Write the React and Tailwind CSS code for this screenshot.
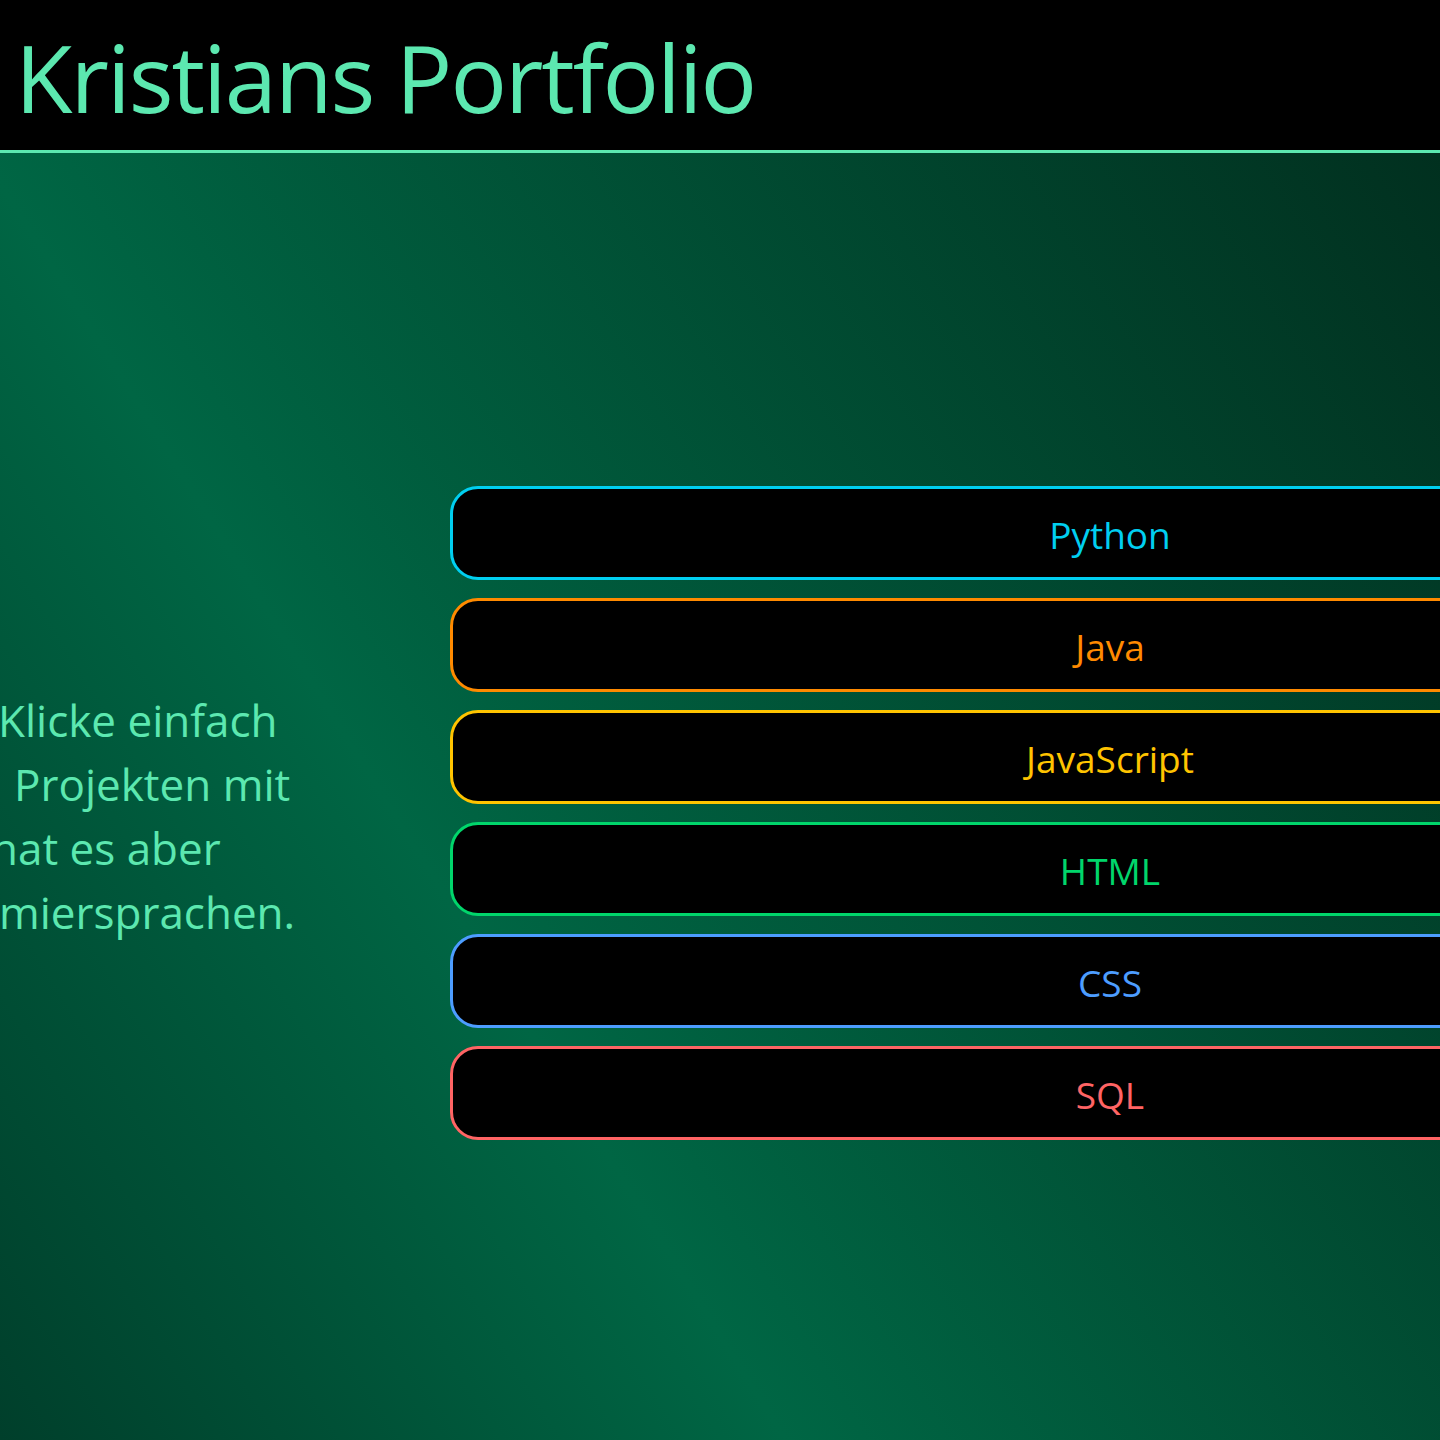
const languages = [
	{ name: "Python", className: "border-[#00cff0] text-[#00cff0]" },
	{ name: "Java", className: "border-[#ff8a00] text-[#ff8a00]" },
	{ name: "JavaScript", className: "border-[#ffc400] text-[#ffc400]" },
	{ name: "HTML", className: "border-[#00d66b] text-[#00d66b]" },
	{ name: "CSS", className: "border-[#4d9dff] text-[#4d9dff]" },
	{ name: "SQL", className: "border-[#ff6464] text-[#ff6464]" }
];

const App = () => (
	<div className="min-h-[1440px] w-full overflow-hidden font-['Open_Sans',sans-serif] text-[#5ce8b0]">
		<header className="h-[153px] bg-black border-b-[3px] border-[#5ce8b0] flex items-center px-[15px]">
			<h1 className="text-[94px] leading-none tracking-[-2px] mt-[4px]">Kristians Portfolio</h1>
		</header>
		<main className="h-[1287px] flex items-start bg-[linear-gradient(238deg,#01301f_0%,#006644_65%,#003f2b_100%)]">
			<div className="w-[450px] shrink-0 pt-[535px] text-[44px] leading-[64px] whitespace-pre">
				<div className="-ml-[2px]">Klicke einfach</div>
				<div className="ml-[14px]">Projekten mit</div>
				<div className="-ml-[9px]">hat es aber</div>
				<div className="-ml-[1px]">miersprachen.</div>
			</div>
			<nav className="w-[1320px] shrink-0 pt-[333px] flex flex-col gap-[18px]">
				{languages.map(({ name, className }) => (
					<button
						key={name}
						className={`h-[94px] w-full rounded-[28px] border-[3px] bg-black text-[37px] pt-[3px] ${className}`}
					>
						{name}
					</button>
				))}
			</nav>
		</main>
	</div>
);

export default App;
